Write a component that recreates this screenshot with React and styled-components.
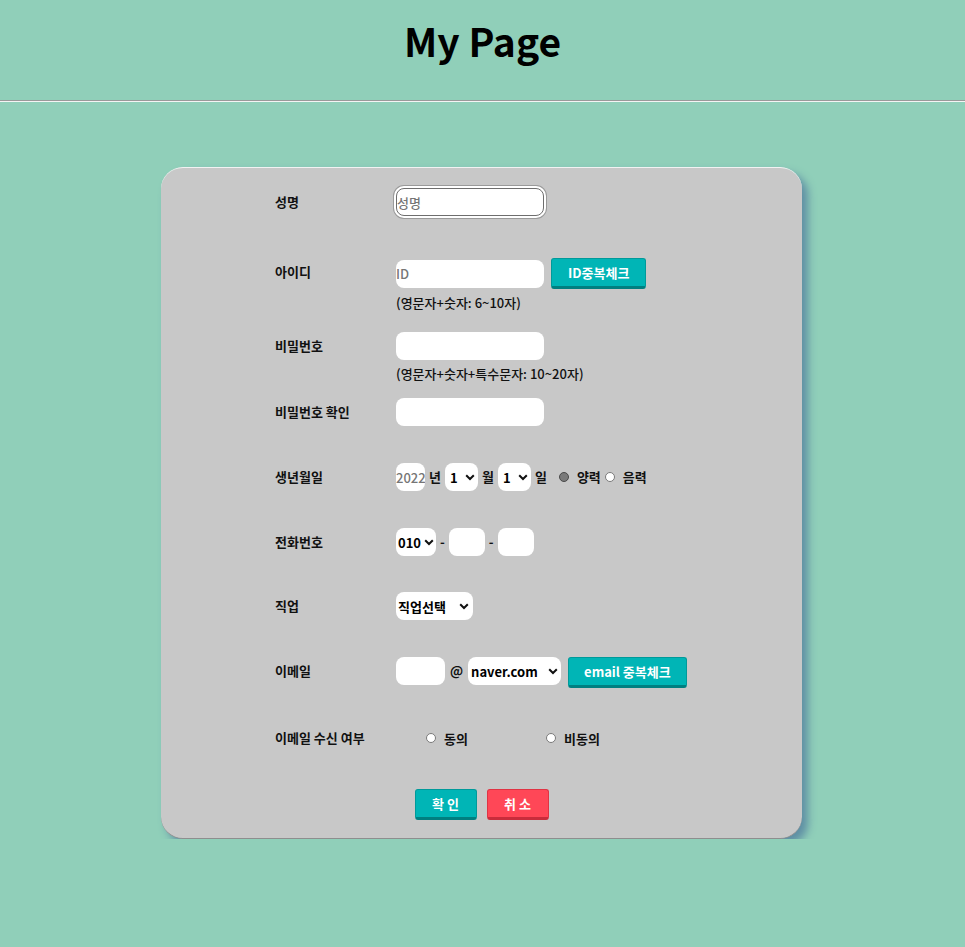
import styled, { createGlobalStyle } from "styled-components";

const GlobalStyle = createGlobalStyle`
  body {
    margin: 0;
    background-color: #90cfb9;
    font-family: "Noto Sans CJK KR", "Noto Sans", sans-serif;
  }
`;

const Header = styled.header`
  height: 100px;
  box-sizing: border-box;
  padding-top: 12px;
  display: flex;
  justify-content: center;
  align-items: flex-start;
`;

const Title = styled.h1`
  margin: 0;
  font-size: 39px;
  line-height: 56px;
  font-weight: 700;
  color: #000;
`;

const Divider = styled.hr`
  margin: 0;
  border: none;
  border-top: 1px solid #9a9a9a;
  border-bottom: 1px solid #f4f4f4;
`;

const Card = styled.form`
  width: 641px;
  box-sizing: border-box;
  margin: 65px 0 0 161px;
  padding: 20px 0 18px 114px;
  background-color: #c8c8c8;
  border-radius: 22px;
  border-top: 1px solid #f2f2f2;
  border-bottom: 1px solid #8e8e8e;
  box-shadow: 6px 6px 8px #5f8fa4;
`;

const Row = styled.div`
  display: grid;
  grid-template-columns: 121px 1fr;
  align-items: start;
  height: ${(p) => p.$h}px;
`;

const Label = styled.label`
  font-size: 13px;
  font-weight: 700;
  line-height: 28px;
  color: #111;
`;

const Field = styled.div`
  display: flex;
  flex-direction: column;
  align-items: flex-start;
`;

const Inline = styled.div`
  display: flex;
  align-items: ${(p) => p.$align || "center"};
  gap: ${(p) => p.$gap ?? 4}px;
  font-size: 13px;
  font-weight: 700;
  line-height: 28px;
  color: #111;
`;

const TextInput = styled.input`
  width: ${(p) => p.$w || 148}px;
  height: 28px;
  box-sizing: border-box;
  padding: 0;
  border: none;
  border-radius: 8px;
  background: #fff;
  font-family: inherit;
  font-size: 13px;
  font-weight: 500;
  color: #777;
  outline: none;

  &::placeholder {
    color: #767676;
  }
`;

const FocusInput = styled(TextInput)`
  border: 1px solid #6e6e6e;
  box-shadow: 0 0 0 2px #fff, 0 0 0 3px #9a9a9a;
`;

const SelectBox = styled.div`
  position: relative;
  display: inline-flex;
  width: ${(p) => p.$w}px;
  height: 28px;
`;

const Select = styled.select`
  appearance: none;
  width: 100%;
  height: 100%;
  border: none;
  border-radius: 8px;
  background: #fff;
  padding: 0 14px 0 ${(p) => p.$pl ?? 3}px;
  font-family: inherit;
  font-size: 13px;
  font-weight: 700;
  color: #000;
  outline: none;
`;

const Chevron = styled.svg`
  position: absolute;
  right: ${(p) => p.$r ?? 3}px;
  top: 11px;
  width: 10px;
  height: 7px;
  pointer-events: none;
`;

const Hint = styled.span`
  margin-top: 4px;
  font-size: 13px;
  font-weight: 500;
  color: #111;
`;

const Button = styled.button`
  width: ${(p) => (p.$w ? `${p.$w}px` : "auto")};
  height: 31px;
  padding: 0 ${(p) => p.$px ?? 16}px;
  border: 1px solid ${(p) => (p.$red ? "#e03444" : "#009a9a")};
  border-bottom: 3px solid ${(p) => (p.$red ? "#c92c3b" : "#007f80")};
  border-radius: 3px;
  background-color: ${(p) => (p.$red ? "#ff4757" : "#00b5b6")};
  color: #fff;
  font-family: inherit;
  font-size: 13px;
  font-weight: 700;
  white-space: nowrap;
`;

const Radio = styled.input.attrs({ type: "radio" })`
  appearance: none;
  margin: 0;
  width: 10px;
  height: 10px;
  box-sizing: border-box;
  border-radius: 50%;
  border: 1px solid #7a7a7a;
  background: #fff;

  &:checked {
    border-color: #4a4a4a;
    background: #7a7a7a;
  }
`;

const RadioGroup = styled.div`
  display: grid;
  grid-template-columns: 120px 120px;
  padding-left: 30px;
  height: 28px;
  align-items: center;
`;

const RadioLabel = styled.label`
  display: flex;
  align-items: center;
  gap: 8px;
  margin-left: ${(p) => p.$ml || 0}px;
  font-size: 13px;
  font-weight: 700;
  color: #111;
`;

const Actions = styled.div`
  display: flex;
  justify-content: center;
  gap: 10px;
  margin-left: -114px;
`;

function Dropdown({ w, value, pl, r }) {
  return (
    <SelectBox $w={w}>
      <Select $pl={pl} defaultValue={value}>
        <option>{value}</option>
      </Select>
      <Chevron $r={r} viewBox="0 0 10 7">
        <polyline
          points="1.2,1.2 5,5 8.8,1.2"
          fill="none"
          stroke="#111"
          strokeWidth="2"
        />
      </Chevron>
    </SelectBox>
  );
}

export default function App() {
  return (
    <>
      <GlobalStyle />
      <Header>
        <Title>My Page</Title>
      </Header>
      <Divider />
      <Card>
        <Row $h={70}>
          <Label>성명</Label>
          <Field>
            <FocusInput placeholder="성명" />
          </Field>
        </Row>
        <Row $h={74}>
          <Label>아이디</Label>
          <Field>
            <Inline $gap={7}>
              <TextInput placeholder="ID" />
              <Button type="button">ID중복체크</Button>
            </Inline>
            <Hint>(영문자+숫자: 6~10자)</Hint>
          </Field>
        </Row>
        <Row $h={66}>
          <Label>비밀번호</Label>
          <Field>
            <TextInput type="password" />
            <Hint>(영문자+숫자+특수문자: 10~20자)</Hint>
          </Field>
        </Row>
        <Row $h={65}>
          <Label>비밀번호 확인</Label>
          <Field>
            <TextInput type="password" />
          </Field>
        </Row>
        <Row $h={65}>
          <Label>생년월일</Label>
          <Inline $gap={4}>
            <TextInput $w={29} placeholder="2022" />
            <span>년</span>
            <Dropdown w={33} value="1" pl={5} />
            <span>월</span>
            <Dropdown w={33} value="1" pl={5} />
            <span>일</span>
            <RadioLabel $ml={8}>
              <Radio name="cal" defaultChecked />
              양력
            </RadioLabel>
            <RadioLabel>
              <Radio name="cal" />
              음력
            </RadioLabel>
          </Inline>
        </Row>
        <Row $h={64}>
          <Label>전화번호</Label>
          <Inline $gap={4}>
            <Dropdown w={40} value="010" pl={2} r={2} />
            <span>-</span>
            <TextInput $w={36} />
            <span>-</span>
            <TextInput $w={36} />
          </Inline>
        </Row>
        <Row $h={65}>
          <Label>직업</Label>
          <Field>
            <Dropdown w={77} value="직업선택" pl={2} r={4} />
          </Field>
        </Row>
        <Row $h={67}>
          <Label>이메일</Label>
          <Inline $gap={5} $align="flex-start">
            <TextInput $w={49} />
            <span>@</span>
            <Dropdown w={93} value="naver.com" pl={3} />
            <Button type="button" $px={15} style={{ marginLeft: 2 }}>
              email 중복체크
            </Button>
          </Inline>
        </Row>
        <Row $h={65}>
          <Label>이메일 수신 여부</Label>
          <RadioGroup>
            <RadioLabel>
              <Radio name="agree" />
              동의
            </RadioLabel>
            <RadioLabel>
              <Radio name="agree" />
              비동의
            </RadioLabel>
          </RadioGroup>
        </Row>
        <Actions>
          <Button type="submit" $w={62} $px={0}>
            확 인
          </Button>
          <Button type="button" $red $w={62} $px={0}>
            취 소
          </Button>
        </Actions>
      </Card>
    </>
  );
}
